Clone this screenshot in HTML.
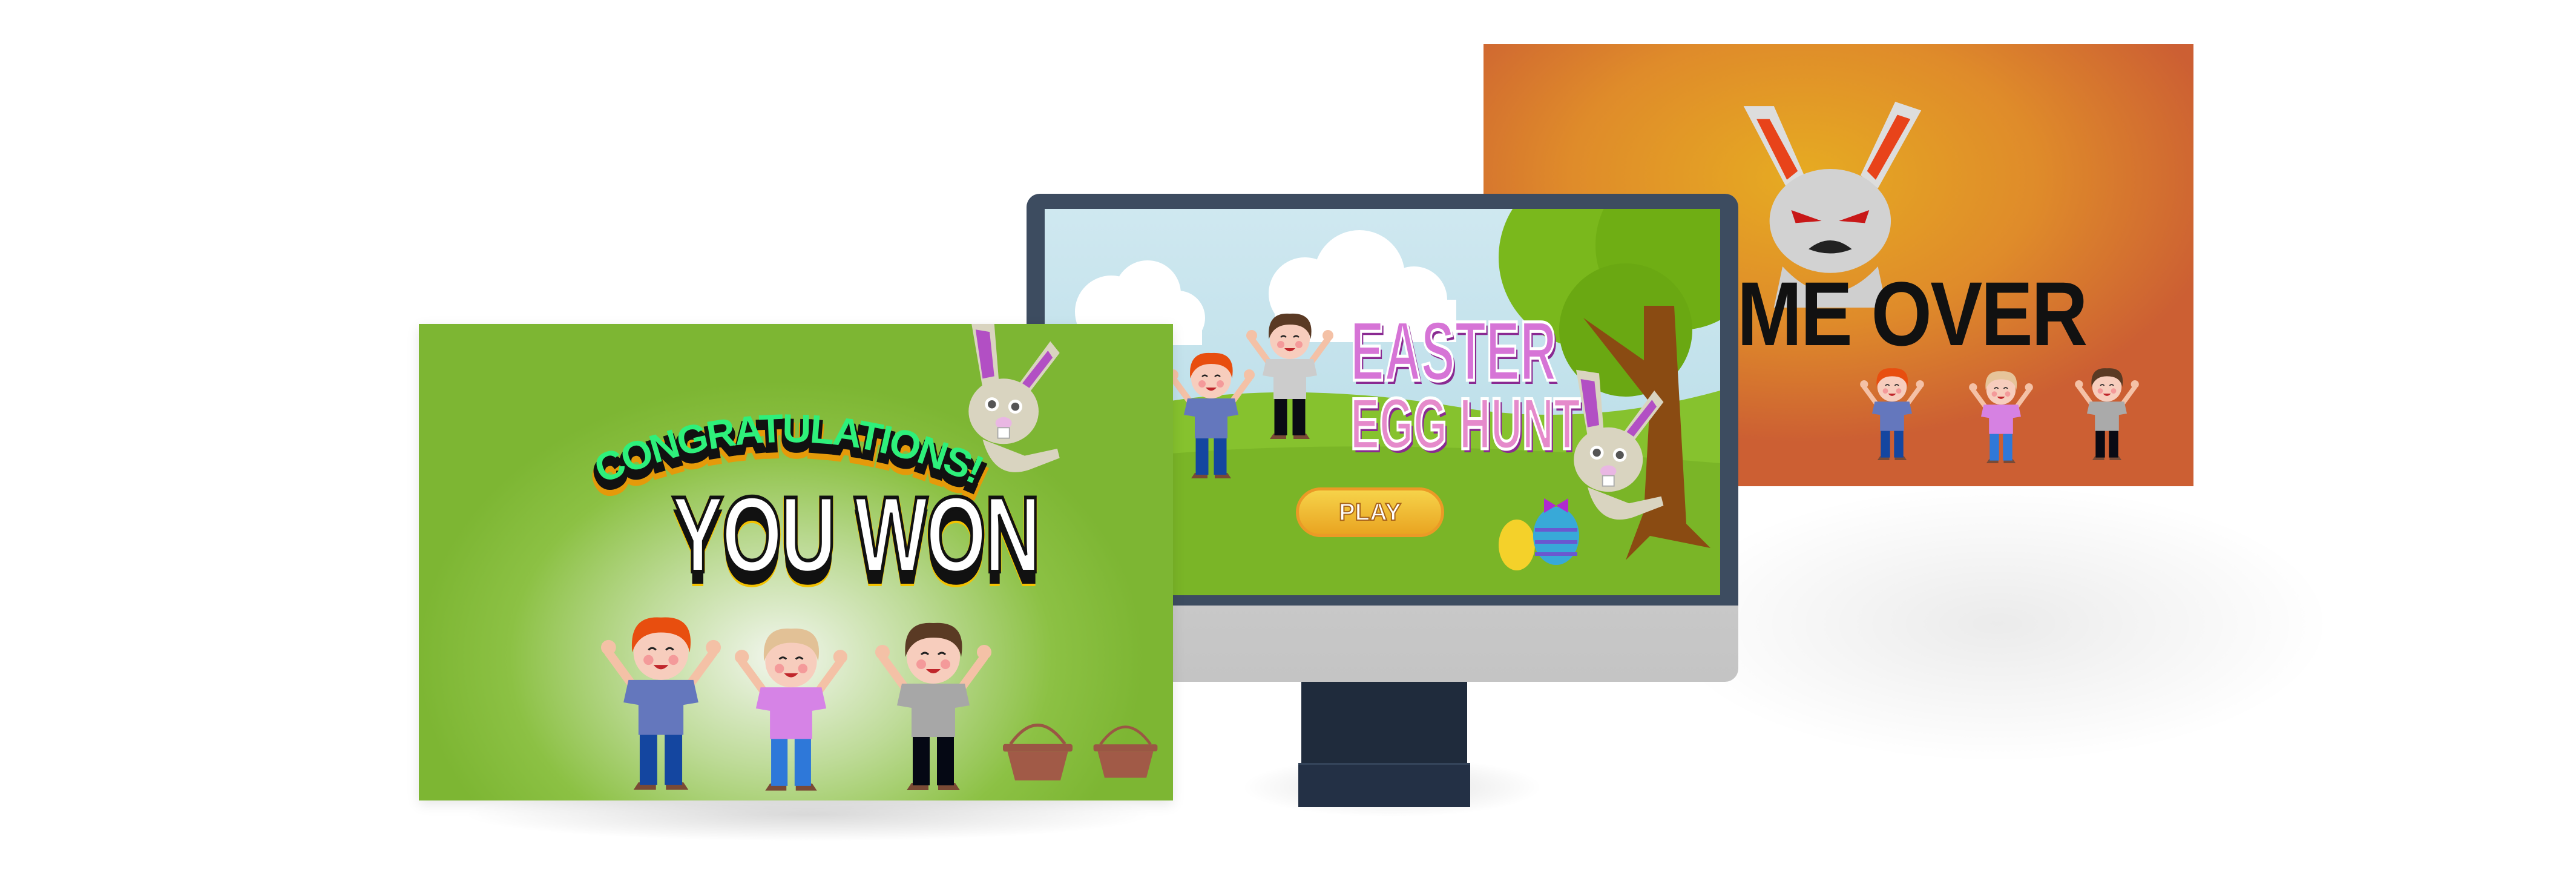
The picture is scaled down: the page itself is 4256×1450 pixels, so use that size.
<!DOCTYPE html>
<html><head><meta charset="utf-8">
<style>
html,body{margin:0;padding:0;background:#fff;}
body{width:4256px;height:1450px;position:relative;overflow:hidden;font-family:"Liberation Sans",sans-serif;}
.abs{position:absolute;}
.kid{--hair:#e84e0f;--shirt:#6477bd;--pants:#1446a0;}
</style></head><body>
<svg width="0" height="0" style="position:absolute">
<defs>
<symbol id="kid" viewBox="0 0 100 160">
<path d="M30 70 L8 40" stroke="#f4c1a6" stroke-width="7" stroke-linecap="round"/>
<path d="M70 70 L92 40" stroke="#f4c1a6" stroke-width="7" stroke-linecap="round"/>
<circle cx="8" cy="36" r="6" fill="#f4c1a6"/><circle cx="92" cy="36" r="6" fill="#f4c1a6"/>
<path d="M32 144 h14 v6 h-18z M54 144 h14 l4 6 h-18z" fill="#7a4a35"/>
<rect x="33" y="102" width="14" height="44" fill="var(--pants)"/>
<rect x="53" y="102" width="14" height="44" fill="var(--pants)"/>
<path d="M24 62 L76 62 L80 80 L68 82 L68 106 L32 106 L32 82 L20 80Z" fill="var(--shirt)"/>
<circle cx="50" cy="40" r="22" fill="#f7cdbd"/>
<path d="M27 40 Q24 10 50 12 Q78 10 73 40 Q70 24 50 24 Q32 24 27 40Z" fill="var(--hair)"/>
<circle cx="40" cy="46" r="4" fill="#f49a9a"/><circle cx="60" cy="46" r="4" fill="#f49a9a"/>
<path d="M40 38 q3 -3 6 0 M54 38 q3 -3 6 0" stroke="#222" stroke-width="1.5" fill="none"/>
<path d="M44 50 q6 7 12 0z" fill="#c0262b"/>
</symbol>
<symbol id="bunny" viewBox="0 0 100 140">
<path d="M30 60 L20 2 L40 5 L44 55Z" fill="#d9d4c0"/><path d="M30 52 L24 10 L36 12 L40 50Z" fill="#b24fc4"/>
<path d="M60 58 L88 20 L96 30 L70 64Z" fill="#d9d4c0"/><path d="M64 56 L86 28 L90 34 L70 60Z" fill="#b24fc4"/>
<ellipse cx="48" cy="80" rx="30" ry="28" fill="#d9d4c0"/>
<circle cx="38" cy="74" r="6" fill="#fff"/><circle cx="38" cy="74" r="3.5" fill="#555"/>
<circle cx="58" cy="76" r="6" fill="#fff"/><circle cx="58" cy="76" r="3.5" fill="#555"/>
<ellipse cx="48" cy="90" rx="7" ry="5" fill="#e9b7e3"/>
<rect x="43" y="94" width="10" height="9" fill="#fff" stroke="#aaa"/>
<path d="M30 104 Q40 140 70 130 L96 120 L94 112 L66 118Z" fill="#d9d4c0"/>
</symbol>
<symbol id="basket" viewBox="0 0 100 90">
<path d="M14 40 Q50 -10 86 40" stroke="#9a5744" stroke-width="4" fill="none"/>
<rect x="4" y="40" width="92" height="10" rx="3" fill="#9a5744"/>
<path d="M10 50 L90 50 L80 88 L20 88Z" fill="#a15a47"/>
</symbol>
</defs>
</svg>

<!-- shadows -->
<div class="abs" style="left:760px;top:1300px;width:1150px;height:90px;background:radial-gradient(ellipse at center,rgba(0,0,0,.15),rgba(0,0,0,0) 70%);"></div>
<div class="abs" style="left:2700px;top:780px;width:1200px;height:500px;background:radial-gradient(ellipse at center,rgba(0,0,0,.08),rgba(0,0,0,0) 65%);"></div>
<div class="abs" style="left:2050px;top:1250px;width:500px;height:100px;background:radial-gradient(ellipse at center,rgba(0,0,0,.12),rgba(0,0,0,0) 70%);"></div>

<!-- orange card -->
<div class="abs" style="left:2451px;top:73px;width:1173px;height:730px;overflow:hidden;background:radial-gradient(ellipse 60% 60% at 45% 30%,#e6ab22 0%,#df8b2a 55%,#cc5f33 100%);">
  <svg class="abs" style="left:400px;top:95px" width="360" height="340" viewBox="0 0 100 95">
    <path d="M28 40 L8 2 L22 2 L36 34Z" fill="#ddd"/><path d="M28 36 L14 8 L20 8 L33 32Z" fill="#e8431a"/>
    <path d="M62 34 L78 0 L90 4 L70 40Z" fill="#ddd"/><path d="M65 32 L79 6 L85 8 L69 36Z" fill="#e8431a"/>
    <ellipse cx="48" cy="55" rx="28" ry="24" fill="#d2d2d2"/>
    <path d="M30 50 L44 55 L32 56Z M66 50 L52 55 L64 56Z" fill="#c81818"/>
    <path d="M38 68 Q48 60 58 68 Q48 72 38 68Z" fill="#222"/>
    <path d="M26 76 Q48 100 70 76 L74 95 L22 95Z" fill="#cfcfcf"/>
  </svg>
  <div class="abs" style="right:177px;top:365px;font-weight:bold;font-size:150px;line-height:160px;color:#111;letter-spacing:-3px;transform:scaleX(0.86);transform-origin:right;white-space:nowrap;">GAME OVER</div>
  <svg class="abs kid" style="left:620px;top:505px" width="110" height="210"><use href="#kid" width="110" height="210"/></svg>
  <svg class="abs kid" style="left:800px;top:515px;--hair:#e6c49a;--shirt:#d681e2;--pants:#2f78d8" width="110" height="200"><use href="#kid" width="110" height="200"/></svg>
  <svg class="abs kid" style="left:975px;top:505px;--hair:#5a3a24;--shirt:#aaa;--pants:#0a0a14" width="110" height="210"><use href="#kid" width="110" height="210"/></svg>
</div>

<!-- monitor -->
<div class="abs" style="left:2150px;top:1110px;width:274px;height:160px;background:#1f2b3c;"></div>
<div class="abs" style="left:2145px;top:1260px;width:284px;height:70px;background:#233045;border-top:3px solid #34445a;"></div>
<div class="abs" style="left:1696px;top:320px;width:1176px;height:806px;border-radius:22px;background:linear-gradient(#dcdcdc,#c4c4c4);overflow:hidden;">
  <div class="abs" style="left:0;top:0;width:1176px;height:680px;background:#3d4c60;"></div>
  <div class="abs" style="left:30px;top:25px;width:1116px;height:638px;overflow:hidden;background:linear-gradient(#cfe8f0 0%,#bfe0ea 55%,#8cc63a 56%,#76b028 100%);">
    <svg class="abs" style="left:0;top:0" width="1116" height="638" viewBox="0 0 1116 638">
      <path d="M0 370 Q300 260 700 330 Q900 360 1116 300 L1116 638 L0 638Z" fill="#86c22e"/>
      <path d="M0 430 Q400 360 1116 420 L1116 638 L0 638Z" fill="#7ab527"/>
      <g fill="#fff"><circle cx="110" cy="170" r="60"/><circle cx="170" cy="140" r="55"/><circle cx="220" cy="180" r="45"/><rect x="60" y="170" width="200" height="55"/>
      <circle cx="430" cy="140" r="60"/><circle cx="520" cy="110" r="75"/><circle cx="610" cy="150" r="55"/><rect x="380" y="150" width="300" height="70"/></g>
      <circle cx="900" cy="80" r="150" fill="#7ab81c"/><circle cx="1050" cy="60" r="140" fill="#6fae14"/><circle cx="960" cy="200" r="110" fill="#6aa812"/>
      <path d="M890 180 L990 250 L990 160 L1040 160 L1060 520 L1100 560 L1000 540 L960 580 L990 500 L1000 320 Z" fill="#8a4b12"/>
    </svg>
    <svg class="abs" style="left:840px;top:260px" width="190" height="270"><use href="#bunny" width="190" height="270"/></svg>
    <svg class="abs kid" style="left:200px;top:200px" width="150" height="280"><use href="#kid" width="150" height="280"/></svg>
    <svg class="abs kid" style="left:330px;top:150px;--hair:#5a3a24;--shirt:#ccc;--pants:#0a0a14" width="150" height="250"><use href="#kid" width="150" height="250"/></svg>
    <div class="abs" style="left:505px;top:175px;font-weight:bold;font-size:140px;line-height:120px;color:#d674d6;-webkit-text-stroke:5px #fff;transform:scaleX(0.6);transform-origin:left;white-space:nowrap;text-shadow:6px 6px 0 #8a2a92;">EASTER</div>
    <div class="abs" style="left:505px;top:300px;font-weight:bold;font-size:120px;line-height:110px;color:#e58acb;-webkit-text-stroke:5px #fff;transform:scaleX(0.6);transform-origin:left;white-space:nowrap;text-shadow:6px 6px 0 #8a2a92;">EGG HUNT</div>
    <div class="abs" style="left:415px;top:460px;width:245px;height:82px;border-radius:41px;background:linear-gradient(#f6d34a,#e9a421);border:5px solid #eb9a26;box-sizing:border-box;text-align:center;line-height:72px;font-weight:bold;font-size:40px;color:#fff;-webkit-text-stroke:2px #a7641a;">PLAY</div>
    <svg class="abs" style="left:740px;top:470px" width="170" height="140" viewBox="0 0 170 140"><ellipse cx="40" cy="85" rx="30" ry="42" fill="#f4d12a"/><ellipse cx="105" cy="70" rx="38" ry="48" fill="#38a9d8"/><path d="M70 60h70M70 80h70M70 100h70" stroke="#6a58d0" stroke-width="6"/><path d="M105 20 l-20 -12 v24z M105 20 l20 -12 v24z" fill="#b02ad0"/></svg>
  </div>
</div>

<!-- green card -->
<div class="abs" style="left:692px;top:535px;width:1246px;height:787px;overflow:hidden;background:radial-gradient(ellipse 48% 58% at 48% 70%,#f2f6ee 0%,#bedb98 40%,#8cc144 75%,#7db633 100%);box-shadow:0 6px 20px rgba(0,0,0,.1);">
  <svg class="abs" style="left:870px;top:-10px" width="200" height="270"><use href="#bunny" width="200" height="270"/></svg>
  <svg class="abs" style="left:250px;top:70px" width="720" height="240" viewBox="0 0 720 240">
    <defs><path id="arc" d="M0 220 Q360 30 720 220"/></defs>
    <g font-family="Liberation Sans" font-weight="bold" font-size="66" letter-spacing="-3">
    <text fill="#111" stroke="#e59a0a" stroke-width="14" transform="translate(0,20)"><textPath href="#arc" startOffset="50%" text-anchor="middle">CONGRATULATIONS!</textPath></text>
    <text fill="#111" stroke="#111" stroke-width="10" transform="translate(0,12)"><textPath href="#arc" startOffset="50%" text-anchor="middle">CONGRATULATIONS!</textPath></text>
    <text fill="#2ef07b"><textPath href="#arc" startOffset="50%" text-anchor="middle">CONGRATULATIONS!</textPath></text>
    </g>
  </svg>
  <div class="abs" style="left:418px;top:258px;font-weight:bold;font-size:178px;line-height:180px;color:#fff;letter-spacing:-4px;transform:scaleX(0.72);transform-origin:left;white-space:nowrap;-webkit-text-stroke:6px #111;text-shadow:0 20px 0 #111,0 24px 0 #f3c200,4px 0 0 #f3c200,-4px 0 0 #f3c200;">YOU WON</div>
  <svg class="abs kid" style="left:280px;top:460px" width="240" height="330"><use href="#kid" width="240" height="330"/></svg>
  <svg class="abs kid" style="left:500px;top:480px;--hair:#e2c196;--shirt:#d683e6;--pants:#2e78d9" width="230" height="310"><use href="#kid" width="230" height="310"/></svg>
  <svg class="abs kid" style="left:730px;top:470px;--hair:#5a3a24;--shirt:#a7a7a7;--pants:#050814" width="240" height="320"><use href="#kid" width="240" height="320"/></svg>
  <svg class="abs" style="left:960px;top:640px" width="125" height="120"><use href="#basket" width="125" height="120"/></svg>
  <svg class="abs" style="left:1110px;top:640px" width="115" height="120"><use href="#basket" width="115" height="120"/></svg>
</div>
</body></html>
